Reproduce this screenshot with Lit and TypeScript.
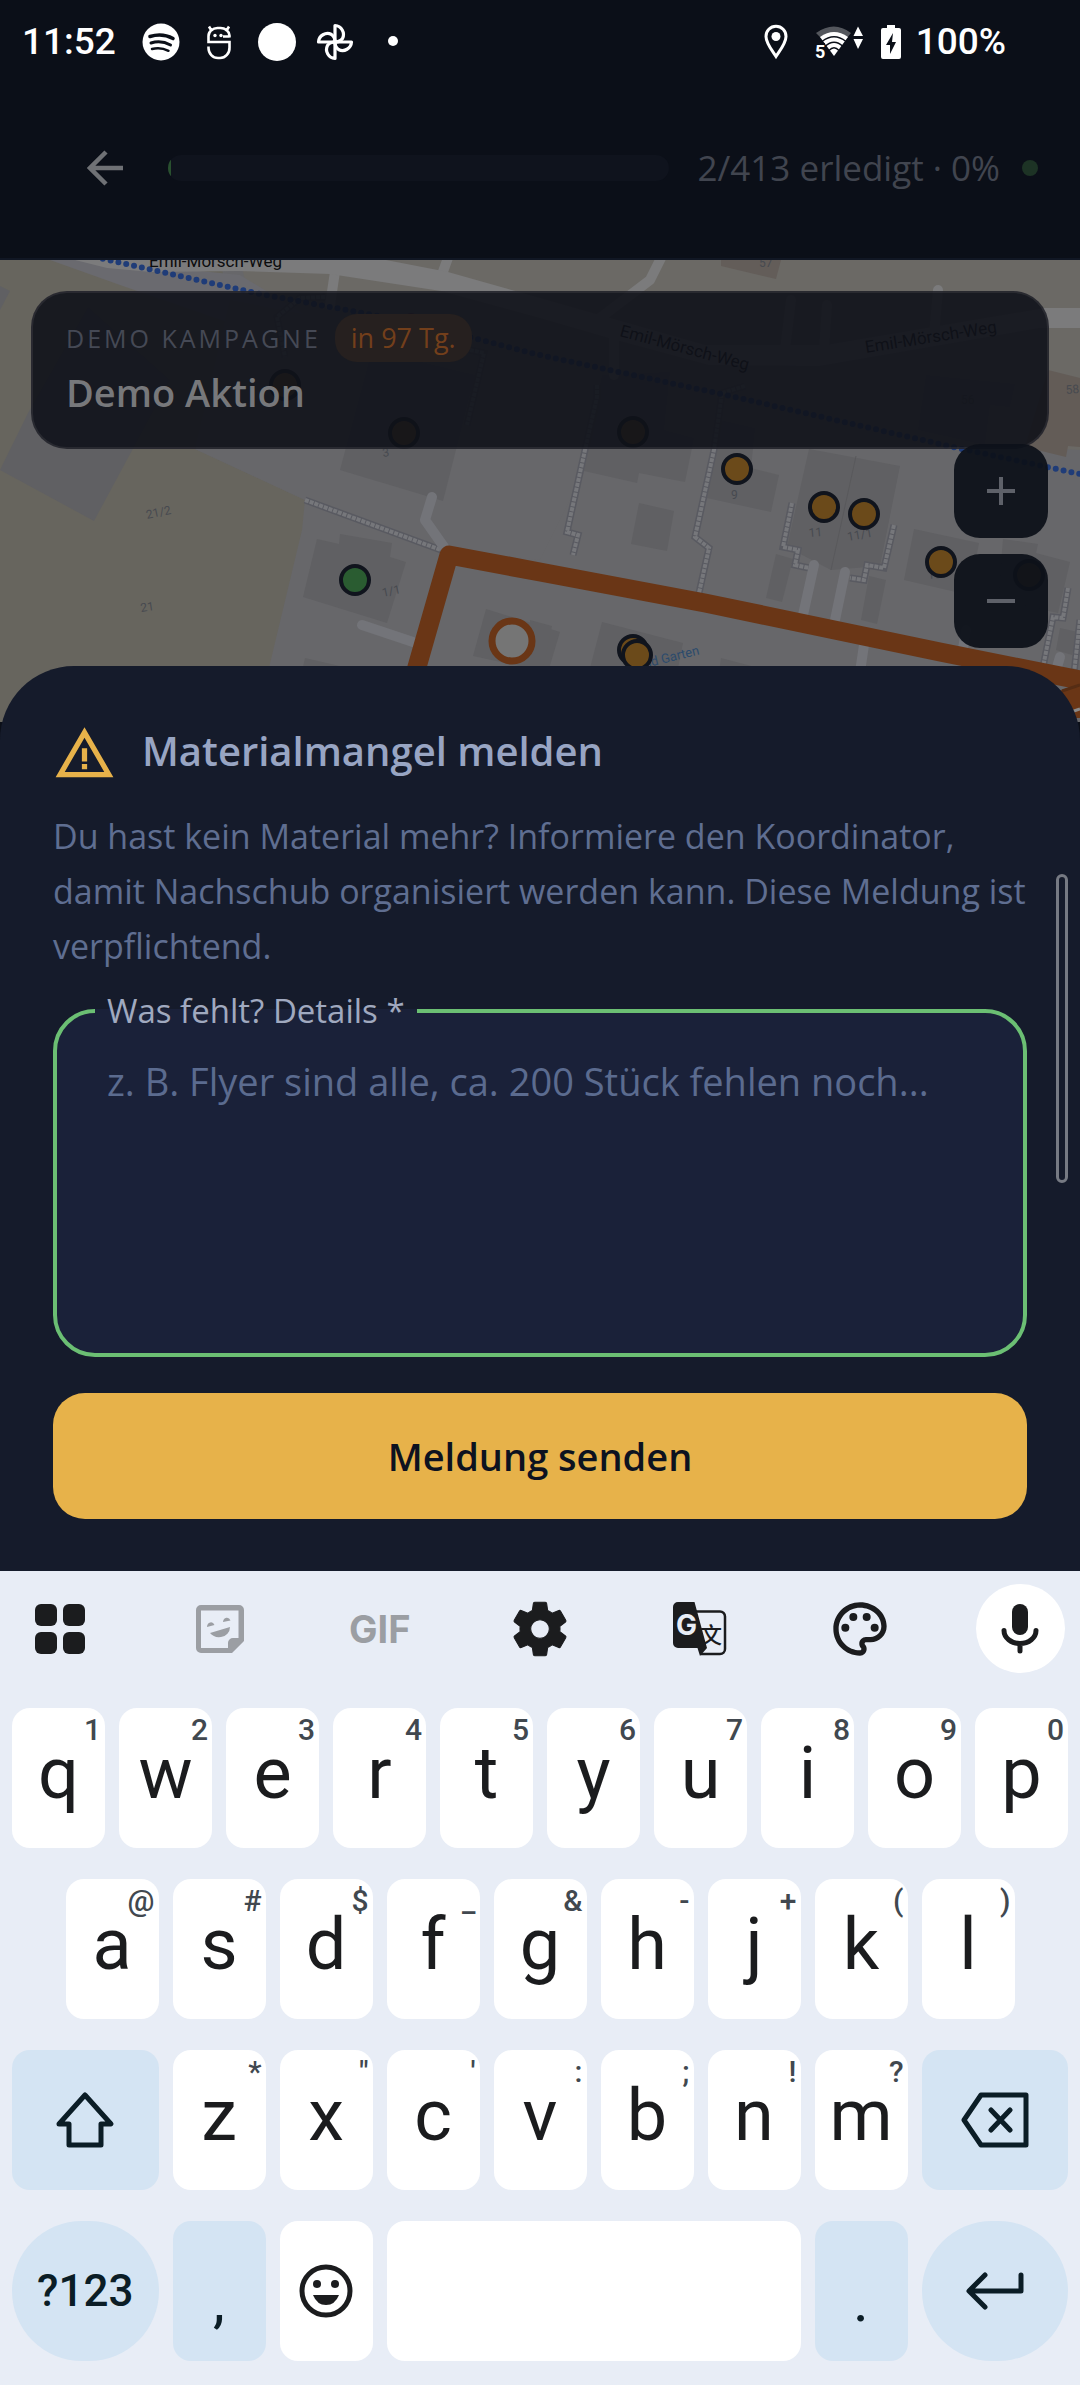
// app.ts
// Shortage report sheet over the campaign map, with status bar and soft keyboard

import { LitElement, html, css, svg, nothing } from "lit";
import { customElement, property } from "lit/decorators.js";
import { classMap } from "lit/directives/class-map.js";

interface Key {
  label: string;
  hint?: string;
  kind?: "shift" | "backspace" | "symbols" | "low" | "emoji" | "space" | "enter";
}

const letters = (chars: string, hints: string): Key[] =>
  [...chars].map((label, i) => ({ label, hint: hints[i] }));

const KEY_ROWS: Key[][] = [
  letters("qwertyuiop", "1234567890"),
  letters("asdfghjkl", "@#$_&-+()"),
  [
    { label: "Umschalt", kind: "shift" },
    ...letters("zxcvbnm", "*\"':;!?"),
    { label: "Löschen", kind: "backspace" },
  ],
  [
    { label: "?123", kind: "symbols" },
    { label: ",", kind: "low" },
    { label: "Emoji", kind: "emoji" },
    { label: "Leerzeichen", kind: "space" },
    { label: ".", kind: "low" },
    { label: "Eingabe", kind: "enter" },
  ],
];

@customElement("status-bar")
export class StatusBar extends LitElement {
  @property() time = "11:52";
  @property({ type: Number }) battery = 100;

  static styles = css`
    :host {
      display: flex;
      align-items: center;
      justify-content: space-between;
      height: 84px;
      padding: 0 74px 0 22px;
      font: 500 37px/40px Roboto, sans-serif;
      color: #fff;
    }

    .group {
      display: flex;
      align-items: center;
    }

    .notifications {
      gap: 20px;
    }

    .system {
      gap: 14px;
    }

    .time {
      margin-right: 6px;
    }

    .location {
      margin-right: 12px;
    }

    svg {
      display: block;
    }
  `;

  protected render() {
    return html`
      <div class="group notifications">
        <span class="time">${this.time}</span>
        <svg width="38" height="38" viewBox="0 0 38 38" fill="none" stroke="#0b0f18" stroke-linecap="round">
          <circle cx="19" cy="19" r="18.500" fill="#fff" stroke="none" />
          <path d="M8 13.500c8-2.400 16.500-1.500 23 2" stroke-width="3.600" />
          <path d="M9 20c6.500-2 13.500-1.300 19.500 2" stroke-width="3" />
          <path d="M10 26c5.500-1.500 11-1 16.500 1.800" stroke-width="2.500" />
        </svg>
        <svg width="38" height="38" viewBox="-1 0 38 38" fill="none" stroke="#fff" stroke-width="2.600">
          <path d="M28.500 14.500V12.500A9 8 0 0 0 19 5h-2A9 8 0 0 0 7.500 13v6h21v5.500A9.500 10 0 0 1 19 35h-2a9.500 10 0 0 1-9.500-10v-1.500M11 8.500 8 3.500M25 8.500l3-5M22 13.500h6.500" />
          <circle cx="14" cy="12.500" r="1.700" fill="#fff" stroke="none" />
          <circle cx="20" cy="12.500" r="1.700" fill="#fff" stroke="none" />
        </svg>
        <svg width="38" height="38" viewBox="0 0 38 38">
          <circle cx="19" cy="19" r="19" fill="#fff" />
        </svg>
        <svg width="38" height="38" viewBox="0 0 38 38" fill="none" stroke="#fff" stroke-width="3.200" stroke-linejoin="round">
          <path d="M19 19V2.500A9 9 0 0 1 26.500 15.500Q24 19 19 19" />
          <path d="M19 19H35.500A9 9 0 0 1 22.500 26.500Q19 24 19 19" />
          <path d="M19 19V35.500A9 9 0 0 1 11.500 22.500Q14 19 19 19" />
          <path d="M19 19H2.500A9 9 0 0 1 15.500 11.500Q19 14 19 19" />
        </svg>
        <svg width="38" height="38" viewBox="0 0 38 38">
          <circle cx="19" cy="18" r="5" fill="#fff" />
        </svg>
      </div>
      <div class="group system">
        <svg class="location" width="24" height="36" viewBox="0 0 24 36">
          <path d="M12 2.300A10 10 0 0 0 2 12.500C2 19 7 25 12 32.500C17 25 22 19 22 12.500A10 10 0 0 0 12 2.300Z" fill="none" stroke="#fff" stroke-width="3" />
          <circle cx="12" cy="12.500" r="4.500" fill="#fff" />
        </svg>
        <svg width="52" height="36" viewBox="11 0 52 36">
          <path d="M13 9Q31-4 48 9L44 14Q31 4 18 14Z" fill="#54575d" />
          <path d="M17 13Q31 3 45 13L31 32Z" fill="#fff" />
          <path d="M19 17.500Q31 8 43 17.500M22 22.500Q31 14 40 22.500M26 26.500Q31 21 36 26.500" fill="none" stroke="#0b0f18" stroke-width="1.400" />
          <path d="M12 19h10v15H12z" fill="#0b0f18" />
          <text x="12" y="34" font-family="Roboto, sans-serif" font-size="18" font-weight="700" fill="#fff">5</text>
          <path d="M55 2.500 60 12H50.500ZM50.500 15H60L55 25Z" fill="#fff" />
        </svg>
        <svg width="22" height="36" viewBox="0 0 22 36">
          <path d="M7 1h8v3h4a2 2 0 0 1 2 2v27a2 2 0 0 1-2 2H3a2 2 0 0 1-2-2V6a2 2 0 0 1 2-2h4z" fill="#fff" />
          <path d="M13 9 6 21h4v9l6-12h-4z" fill="#0b0f18" />
        </svg>
        <span>${this.battery}%</span>
      </div>
    `;
  }
}

@customElement("campaign-map")
export class CampaignMap extends LitElement {
  @property() campaign = "DEMO KAMPAGNE";
  @property() action = "Demo Aktion";
  @property() due = "in 97 Tg.";

  static styles = css`
    :host {
      display: block;
      position: relative;
      height: 462px;
      overflow: hidden;
      font-family: "Open Sans", "Noto Sans", sans-serif;
    }

    .map {
      display: block;
      width: 100%;
      height: 100%;
      background: #67676a;
    }

    .card {
      position: absolute;
      top: 31px;
      left: 31px;
      right: 31px;
      box-sizing: border-box;
      height: 158px;
      padding: 21px 33px;
      border: 2px solid rgba(255, 255, 255, 0.07);
      border-radius: 36px;
      background: rgba(15, 18, 25, 0.9);
    }

    .meta {
      display: flex;
      align-items: center;
      gap: 14px;
    }

    .campaign {
      font-size: 25px;
      line-height: 32px;
      letter-spacing: 3px;
      color: #454955;
    }

    .due {
      padding: 6px 16px;
      border-radius: 22px;
      font-size: 27px;
      line-height: 36px;
      color: #733f1b;
      background: #26201f;
    }

    .action {
      margin: 2px 0 0;
      font-size: 38px;
      font-weight: 600;
      line-height: 56px;
      color: #77787b;
    }

    .zoom {
      position: absolute;
      top: 184px;
      right: 32px;
      display: grid;
      gap: 16px;
    }

    .zoom button {
      display: grid;
      place-items: center;
      width: 94px;
      height: 94px;
      padding: 0;
      border: 0;
      border-radius: 26px;
      background: rgba(13, 17, 26, 0.94);
    }
  `;

  private readonly buildings = [
    "0,470 94,521 170,380 88,307 28,413",
    "0,286 10,291 0,310",
    "372,350 475,375 443,501 340,470",
    "317,539 339,544 340,534 392,543 390,557 406,562 387,623 303,597",
    "486,609 560,632 548,672 473,656",
    "305,658 344,667 340,680 300,680",
    "602,375 670,372 664,430 694,438 685,482 639,473 637,483 584,471",
    "639,503 674,511 667,551 631,544",
    "720,420 755,428 751,468 779,475 771,512 707,498",
    "809,449 900,466 880,566 831,570 787,547",
    "914,529 979,543 969,595 904,580",
    "1003,539 1038,544 1036,553 1070,562 1058,613 998,600",
    "776,554 793,559 782,602 766,598",
    "869,576 886,580 877,624 861,620",
    "602,622 683,643 678,668 590,668",
    "530,620 552,626 543,668 530,668",
    "721,658 755,667 750,680 718,680",
    "926,375 1015,384 1010,407 990,405 985,445 918,430",
    "1060,628 1078,632 1072,655 1056,650",
  ];

  private readonly footpaths = [
    "305,500 441,550",
    "597,385 597,397 585,450 567,532 578,535 573,555",
    "745,386 722,393 714,450 695,537 709,548 699,593",
    "792,503 783,547 798,550 795,565 809,568",
    "894,525 884,568 867,565 864,580 850,578",
    "1068,588 1063,618 1053,617 1043,667",
    "1080,620 1074,673",
    "325,297 300,298 277,317 285,357",
    "470,350 484,353 467,425",
  ];

  private readonly driveways = [
    "432,497 425,520 444,547",
    "362,625 413,642",
    "814,565 803,615",
    "845,572 835,620",
    "864,645 860,672",
    "1060,657 1055,674",
    "966,630 962,655",
  ];

  private readonly sideRoads = [
    "336,265 330,305",
    "449,255 440,280",
    "665,250 650,280 600,318",
    "614,335 614,375",
    "791,300 785,350",
    "827,305 824,350",
    "938,290 934,335",
  ];

  private readonly labels: [number, number, number, string][] = [
    [147, 519, -12, "21/2"],
    [141, 612, -8, "21"],
    [383, 457, -8, "3"],
    [383, 597, -12, "1/1"],
    [731, 499, 0, "9"],
    [809, 537, -5, "11"],
    [848, 541, -10, "11/1"],
    [1066, 394, -5, "58"],
    [961, 404, 0, "56"],
    [759, 267, 0, "57"],
    [928, 579, -5, "10"],
  ];

  private readonly markers: [number, number][] = [
    [285, 385],
    [404, 433],
    [633, 432],
    [737, 469],
    [824, 507],
    [864, 514],
    [941, 562],
    [1029, 575],
    [633, 650],
    [637, 655],
  ];

  private renderMap() {
    return html`
      <svg class="map" viewBox="0 260 1080 462" preserveAspectRatio="xMidYMin slice" aria-hidden="true">
        <path d="M0 260H220L260 449H195L305 500L302 530L256 722H0Z" fill="#67655e" />
        <path d="M240 260H1080V450L1025 447L1038 330H820L700 366L540 322L500 400L250 300Z" fill="#6b6965" />
        <path d="M50 260H90L240 275L330 330L250 330L120 285Z" fill="#6a6a6f" />
        <path d="M230 300 540 360 610 420 540 560 440 550 305 500 195 449Z" fill="#67676a" />
        <path d="M1048 370 1080 378V447L1068 446L1066 457L1025 447Z" fill="#635c57" />
        <path d="M721 260H781L776 279L721 266Z" fill="#635d59" />
        ${this.buildings.map((p) => svg`<polygon points=${p} fill="#606063" />`)}
        <path d="M856 456 831 570" stroke="#59595c" fill="none" />
        ${this.footpaths.map(
          (p) => svg`
            <polyline points=${p} fill="none" stroke="#595a61" stroke-width="7" />
            <polyline points=${p} fill="none" stroke="#76777b" stroke-width="4" stroke-dasharray="4 1" />`
        )}
        ${this.driveways.map(
          (p) => svg`<polyline points=${p} fill="none" stroke="#737479" stroke-width="10" stroke-linecap="round" stroke-linejoin="round" />`
        )}
        ${this.sideRoads.map(
          (p) => svg`<polyline points=${p} fill="none" stroke="#7b7b7c" stroke-width="10" stroke-linecap="round" stroke-linejoin="round" />`
        )}
        <path
          d="M75 260 107 268 151 272 238 271 330 274 441 291 540 318 609 338 709 365 819 366 1039 328 1080 328V308H1045L826 345H705L540 298 448 272 386 260Z"
          fill="#7b7b7c"
        />
        <path d="M95 257 157 271 255 293 411 322 535 354 726 395 953 447 1080 474" fill="none" stroke="#1f3c78" stroke-width="6" stroke-linecap="round" stroke-dasharray="0 8" />
        <circle cx="411" cy="320" r="7" fill="#5b3348" />
        <circle cx="450" cy="327" r="7" fill="#5b3348" />
        <g font-family="Roboto, sans-serif" font-size="17" fill="#0c0c0d">
          <text x="149" y="267">Emil-Mörsch-Weg</text>
          <text transform="translate(619 336) rotate(15)">Emil-Mörsch-Weg</text>
          <text transform="translate(866 353) rotate(-9)">Emil-Mörsch-Weg</text>
        </g>
        <g font-family="Roboto, sans-serif" font-size="12" fill="#474a50">
          ${this.labels.map(
            ([x, y, angle, text]) => svg`<text transform="translate(${x} ${y}) rotate(${angle})">${text}</text>`
          )}
        </g>
        <text transform="translate(645 668) rotate(-14)" font-family="Roboto, sans-serif" font-size="13" fill="#2c4b6c">nd Garten</text>
        <path d="M1030 718 1056 692 1080 684V718Z" fill="#6a3616" />
        <path d="M400 730 417 667 449 555 540 572 705 603 940 652 1090 682" fill="none" stroke="#6a3616" stroke-width="19" stroke-linejoin="round" />
        <path d="M1062 691 1080 685" stroke="#562d14" stroke-width="3" />
        <path d="M1068 713 1080 709" stroke="#8a8a8a" stroke-width="3" />
        <circle cx="512" cy="641" r="20" fill="#757575" stroke="#6a3616" stroke-width="7" />
        <circle cx="355" cy="580" r="14" fill="#2a5c31" stroke="#10141d" stroke-width="4" />
        ${this.markers.map(
          ([x, y]) => svg`<circle cx=${x} cy=${y} r="14" fill="#6b4a1a" stroke="#10141d" stroke-width="4" />`
        )}
      </svg>
    `;
  }

  protected render() {
    return html`
      ${this.renderMap()}
      <section class="card">
        <div class="meta">
          <span class="campaign">${this.campaign}</span>
          <span class="due">${this.due}</span>
        </div>
        <h1 class="action">${this.action}</h1>
      </section>
      <div class="zoom">
        <button aria-label="Vergrößern">
          <svg width="28" height="28" viewBox="0 0 28 28" stroke="#5e6169" stroke-width="4">
            <path d="M14 0V28M0 14H28" />
          </svg>
        </button>
        <button aria-label="Verkleinern">
          <svg width="28" height="28" viewBox="0 0 28 28" stroke="#5e6169" stroke-width="4">
            <path d="M0 14H28" />
          </svg>
        </button>
      </div>
    `;
  }
}

@customElement("soft-keyboard")
export class SoftKeyboard extends LitElement {
  static styles = css`
    :host {
      display: block;
      padding: 13px 12px 22px;
      background: #e8edf6;
      font-family: Roboto, sans-serif;
    }

    button {
      display: flex;
      align-items: center;
      justify-content: center;
      padding: 0;
      border: 0;
      background: none;
      font-family: inherit;
      color: #1b1c1e;
    }

    svg {
      display: block;
    }

    .toolbar {
      display: flex;
      justify-content: space-between;
      padding: 0 3px;
      margin-bottom: 35px;
    }

    .tool {
      width: 89px;
      height: 89px;
      border-radius: 50%;
    }

    .tool.muted {
      color: #9b9ea3;
    }

    .tool.mic {
      background: #fff;
    }

    .gif {
      font: 700 38px/40px Inter, sans-serif;
    }

    .rows {
      display: grid;
      gap: 31px;
    }

    .row {
      display: grid;
      grid-template-columns: repeat(20, minmax(0, 1fr));
      column-gap: 14px;
    }

    .key {
      position: relative;
      grid-column: span 2;
      box-sizing: border-box;
      height: 140px;
      padding-bottom: 8px;
      border-radius: 18px;
      background: #fff;
      font-size: 72px;
      line-height: 80px;
    }

    .row.inset .key:first-child {
      grid-column: 2 / span 2;
    }

    .shift,
    .backspace,
    .symbols,
    .low,
    .enter {
      background: #d4e4f3;
      color: #0b1d26;
    }

    .shift,
    .backspace,
    .symbols,
    .enter {
      grid-column: span 3;
      padding: 0;
    }

    .symbols,
    .enter {
      border-radius: 70px;
    }

    .symbols {
      font-size: 44px;
      font-weight: 500;
    }

    .low {
      padding: 20px 0 0;
      font-size: 60px;
    }

    .emoji {
      padding: 0;
    }

    .space {
      grid-column: span 8;
    }

    .hint {
      position: absolute;
      top: 4px;
      right: 4px;
      font-size: 30px;
      font-weight: 500;
      line-height: 36px;
      color: #41484f;
    }
  `;

  private renderToolbar() {
    return html`
      <div class="toolbar">
        <button class="tool" aria-label="Menü">
          <svg width="50" height="50" viewBox="0 0 50 50" fill="currentColor">
            <rect width="22" height="22" rx="6" />
            <rect x="28" width="22" height="22" rx="6" />
            <rect y="28" width="22" height="22" rx="6" />
            <rect x="28" y="28" width="22" height="22" rx="6" />
          </svg>
        </button>
        <button class="tool muted" aria-label="Sticker">
          <svg width="48" height="48" viewBox="0 0 48 48" fill="currentColor">
            <path fill-rule="evenodd" d="M5 0h38a5 5 0 0 1 5 5v31L36 48H5a5 5 0 0 1-5-5V5a5 5 0 0 1 5-5zM5 5.500v37.500h27v-5a5 5 0 0 1 5-5h5.500V5.500z" />
            <path d="M14 28 34 22A10 10 0 0 1 25 32Q18 33 14 28Z" />
            <path d="M11 22A4 5 0 0 1 18.500 20Z M27 17A4 5 0 0 1 34.500 15.500Z" />
          </svg>
        </button>
        <button class="tool muted gif">GIF</button>
        <button class="tool" aria-label="Einstellungen">
          <svg width="64" height="64" viewBox="0 0 24 24" fill="currentColor">
            <path
              d="M19.430 12.980c.040-.320.070-.640.070-.980s-.030-.660-.070-.980l2.110-1.650c.190-.150.240-.420.120-.640l-2-3.460c-.120-.220-.390-.300-.610-.220l-2.490 1c-.520-.400-1.080-.730-1.690-.980l-.380-2.650C14.460 2.180 14.250 2 14 2h-4c-.250 0-.460.180-.490.420l-.380 2.650c-.610.250-1.170.590-1.690.980l-2.490-1c-.230-.090-.490 0-.610.220l-2 3.460c-.130.220-.070.490.120.640l2.110 1.650c-.040.320-.070.650-.070.980s.030.660.070.980l-2.110 1.650c-.190.150-.240.420-.120.640l2 3.460c.120.220.390.300.610.220l2.490-1c.520.400 1.080.730 1.690.980l.380 2.650c.030.240.240.420.490.420h4c.250 0 .460-.180.490-.420l.380-2.650c.610-.250 1.170-.590 1.690-.980l2.490 1c.230.090.490 0 .610-.220l2-3.460c.120-.220.070-.490-.120-.640zM12 15.500c-1.930 0-3.500-1.570-3.500-3.500s1.570-3.500 3.500-3.500 3.500 1.570 3.500 3.500-1.570 3.500-3.500 3.500z"
              stroke="currentColor"
              stroke-width="0.400"
              stroke-linejoin="round"
            />
          </svg>
        </button>
        <button class="tool" aria-label="Übersetzen">
          <svg width="54" height="54" viewBox="0 0 54 54">
            <path d="M20 9.500H47a5 5 0 0 1 5 5V47a5 5 0 0 1-5 5H28" fill="none" stroke="currentColor" stroke-width="2.500" />
            <path d="M5 0H21.500L34 46 27 54 24.500 46H5a5 5 0 0 1-5-5V5a5 5 0 0 1 5-5Z" fill="currentColor" />
            <text x="3" y="33" font-family="Inter, sans-serif" font-size="28" font-weight="700" fill="#e8edf6">G</text>
            <text x="27" y="41" font-family="Noto Sans CJK SC, sans-serif" font-size="22" font-weight="500" fill="currentColor">文</text>
          </svg>
        </button>
        <button class="tool" aria-label="Design">
          <svg width="64" height="64" viewBox="0 0 24 24" fill="currentColor">
            <path
              d="M12 22C6.490 22 2 17.510 2 12S6.490 2 12 2s10 4.040 10 9c0 3.310-2.690 6-6 6h-1.770c-.280 0-.500.220-.500.500 0 .120.050.230.130.330.410.470.640 1.060.640 1.670 0 1.380-1.120 2.500-2.500 2.500zm0-18c-4.410 0-8 3.590-8 8s3.590 8 8 8c.280 0 .500-.220.500-.500 0-.160-.080-.280-.140-.350-.410-.460-.630-1.050-.630-1.650 0-1.380 1.120-2.500 2.500-2.500H16c2.210 0 4-1.790 4-4 0-3.860-3.590-7-8-7z"
            />
            <circle cx="6.500" cy="11.500" r="1.500" />
            <circle cx="9.500" cy="7.500" r="1.500" />
            <circle cx="14.500" cy="7.500" r="1.500" />
            <circle cx="17.500" cy="11.500" r="1.500" />
          </svg>
        </button>
        <button class="tool mic" aria-label="Spracheingabe">
          <svg width="38" height="50" viewBox="0 0 38 50">
            <rect x="11" width="16" height="31" rx="8" fill="currentColor" />
            <path d="M3 26.500A16 13 0 0 0 35 26.500M19 39.500V47" fill="none" stroke="currentColor" stroke-width="5" stroke-linecap="round" />
          </svg>
        </button>
      </div>
    `;
  }

  private renderFace(key: Key) {
    switch (key.kind) {
      case "shift":
        return html`<svg width="60" height="58" viewBox="0 0 60 58" fill="none" stroke="currentColor" stroke-width="5" stroke-linejoin="round">
          <path d="M30 4 56 33H46V54H14V33H4Z" />
        </svg>`;
      case "backspace":
        return html`<svg width="68" height="56" viewBox="0 0 68 56" fill="none" stroke="currentColor" stroke-width="5" stroke-linejoin="round" stroke-linecap="round">
          <path d="M20 3H65V53H20L3 28ZM30 18 49 38M49 18 30 38" />
        </svg>`;
      case "emoji":
        return html`<svg width="54" height="54" viewBox="0 0 54 54">
          <circle cx="27" cy="27" r="24" fill="none" stroke="currentColor" stroke-width="5" />
          <circle cx="18" cy="20" r="4" fill="currentColor" />
          <circle cx="36" cy="20" r="4" fill="currentColor" />
          <path d="M14 31H40Q36 41 27 41T14 31Z" fill="currentColor" />
        </svg>`;
      case "enter":
        return html`<svg width="58" height="38" viewBox="0 0 58 38" fill="none" stroke="currentColor" stroke-width="5" stroke-linejoin="round" stroke-linecap="round">
          <path d="M55 3V19H4M19 3 3 19 19 35" />
        </svg>`;
      case "space":
        return nothing;
      default:
        return key.label;
    }
  }

  private renderKey(key: Key) {
    const drawn = ["shift", "backspace", "emoji", "enter", "space"].includes(key.kind ?? "");
    const classes = { key: true, ...(key.kind ? { [key.kind]: true } : {}) };
    return html`
      <button class=${classMap(classes)} aria-label=${drawn ? key.label : nothing}>
        ${this.renderFace(key)}
        ${key.hint ? html`<span class="hint">${key.hint}</span>` : nothing}
      </button>
    `;
  }

  protected render() {
    return html`
      ${this.renderToolbar()}
      <div class="rows">
        ${KEY_ROWS.map(
          (row, i) => html`<div class=${classMap({ row: true, inset: i === 1 })}>${row.map((k) => this.renderKey(k))}</div>`
        )}
      </div>
    `;
  }
}

@customElement("app-root")
export class AppRoot extends LitElement {
  @property({ type: Number }) done = 2;
  @property({ type: Number }) total = 413;

  static styles = css`
    :host {
      display: flex;
      flex-direction: column;
      min-height: 100vh;
      background: #0b0f18;
      font-family: "Open Sans", "Noto Sans", sans-serif;
    }

    soft-keyboard {
      flex: 1;
    }

    .header {
      display: flex;
      align-items: center;
      box-sizing: border-box;
      height: 176px;
      padding: 0 42px 6px 74px;
      border-bottom: 2px solid #111724;
    }

    .back {
      display: grid;
      place-items: center;
      width: 62px;
      height: 62px;
      margin-right: 32px;
      padding: 0;
      border: 0;
      background: none;
    }

    .progress {
      flex: 1;
      height: 26px;
      border-radius: 13px;
      overflow: hidden;
      background: #0f131d;
    }

    .progress-fill {
      height: 100%;
      min-width: 3px;
      background: #29502f;
    }

    .count {
      margin: 0 22px 0 28px;
      font-size: 35px;
      font-weight: 500;
      line-height: 44px;
      color: #41454f;
    }

    .online {
      width: 16px;
      height: 16px;
      border-radius: 50%;
      background: #1d3325;
    }

    .sheet {
      position: relative;
      margin-top: -56px;
      padding: 56px 53px 52px;
      border-radius: 74px 74px 0 0;
      background: #151b2b;
    }

    .title {
      display: flex;
      align-items: flex-start;
      gap: 26px;
      margin: 0 0 24px;
      font-size: 40px;
      font-weight: 600;
      line-height: 58px;
      color: #98a5c3;
    }

    .text {
      margin: 0 -8px 17px 0;
      font-size: 34px;
      line-height: 55px;
      color: #5f6e91;
    }

    .field {
      margin: 0 0 36px;
      padding: 20px 50px 32px;
      border: 4px solid #6bbf73;
      border-radius: 42px;
      background: #1a2139;
    }

    .field legend {
      margin-left: -12px;
      padding: 0 12px;
      font-size: 33px;
      line-height: 40px;
      color: #a0a9bf;
    }

    .field textarea {
      display: block;
      width: 100%;
      height: 270px;
      padding: 0;
      border: 0;
      outline: 0;
      resize: none;
      overflow: hidden;
      background: none;
      font: 400 38px/60px "Open Sans", "Noto Sans", sans-serif;
      color: #a0a9bf;
    }

    .field textarea::placeholder {
      color: #5b6b8f;
      opacity: 1;
    }

    .send {
      width: 100%;
      height: 126px;
      border: 0;
      border-radius: 32px;
      background: #e7b24a;
      font: 600 38px/52px "Open Sans", "Noto Sans", sans-serif;
      color: #0d1220;
    }

    .scroll-thumb {
      position: absolute;
      top: 208px;
      right: 12px;
      box-sizing: border-box;
      width: 12px;
      height: 309px;
      border: 3px solid #767a83;
      border-radius: 6px;
    }
  `;

  private get percent() {
    return Math.floor((this.done / this.total) * 100);
  }

  protected render() {
    return html`
      <status-bar></status-bar>
      <header class="header">
        <button class="back" aria-label="Zurück">
          <svg width="36" height="36" viewBox="0 0 36 36" fill="none" stroke="#6f7175" stroke-width="4.500">
            <path d="M19 2 3 18 19 34M3 18H36" />
          </svg>
        </button>
        <div class="progress">
          <div class="progress-fill" style="width: ${this.percent}%"></div>
        </div>
        <span class="count">${this.done}/${this.total} erledigt · ${this.percent}%</span>
        <span class="online"></span>
      </header>
      <campaign-map></campaign-map>
      <main class="sheet">
        <h2 class="title">
          <svg width="63" height="63" viewBox="0 0 24 24" fill="#e7b24a">
            <path d="M12 5.990 19.530 19H4.470L12 5.990M12 2 1 21h22L12 2zm1 14h-2v2h2v-2zm0-6h-2v5h2v-5z" />
          </svg>
          Materialmangel melden
        </h2>
        <p class="text">
          Du hast kein Material mehr? Informiere den Koordinator, damit Nachschub organisiert werden kann. Diese Meldung
          ist verpflichtend.
        </p>
        <fieldset class="field">
          <legend><label for="details">Was fehlt? Details *</label></legend>
          <textarea id="details" placeholder="z. B. Flyer sind alle, ca. 200 Stück fehlen noch..."></textarea>
        </fieldset>
        <button class="send">Meldung senden</button>
        <div class="scroll-thumb"></div>
      </main>
      <soft-keyboard></soft-keyboard>
    `;
  }
}

declare global {
  interface HTMLElementTagNameMap {
    "app-root": AppRoot;
    "status-bar": StatusBar;
    "campaign-map": CampaignMap;
    "soft-keyboard": SoftKeyboard;
  }
}
